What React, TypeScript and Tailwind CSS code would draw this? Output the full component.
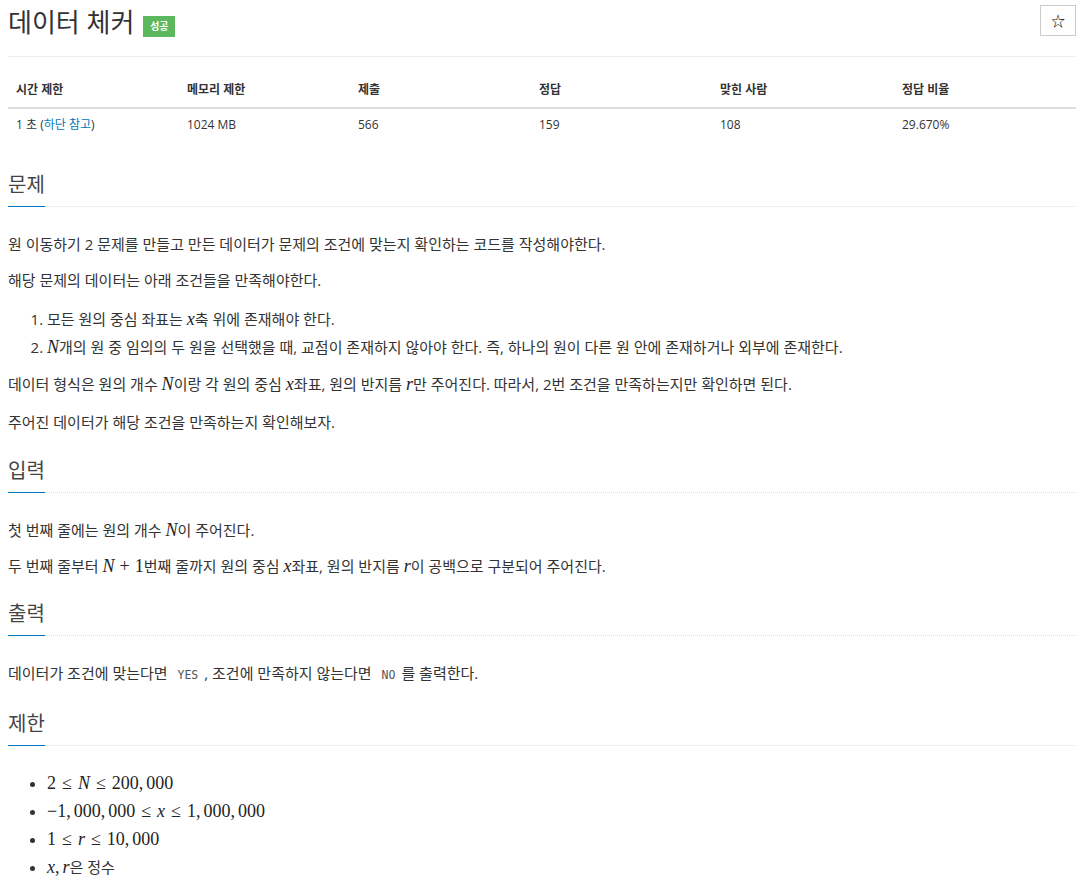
import React from "react";

const M = ({ children }: { children: React.ReactNode }) => (
  <span className="font-['Liberation_Serif',serif] text-[18px] leading-[20px] text-[#222]">{children}</span>
);

const V = ({ children }: { children: React.ReactNode }) => <i className="italic">{children}</i>;

const Le = () => <span className="mx-[6px]">≤</span>;

// comma in math mode: followed by a thin space
const C = () => <span className="mr-[3px]">,</span>;

const Code = ({ children }: { children: React.ReactNode }) => (
  <code className="px-[6px] font-['DejaVu_Sans_Mono',monospace] text-[11.5px] text-[#555]">{children}</code>
);

// margins of the last paragraph collapse into the section margin
const Section = ({
  title,
  children,
  top = "mt-[24px]",
  contentTop = "pt-[26px]",
}: {
  title: string;
  children: React.ReactNode;
  top?: string;
  contentTop?: string;
}) => (
  <section className={top}>
    <div className="border-b border-dotted border-[#ddd]">
      <h2 className="inline-block -mb-px border-b border-[#0076c0] pb-[7px] text-[20px] leading-[28px] font-normal text-[#444]">
        {title}
      </h2>
    </div>
    <div className={contentTop}>{children}</div>
  </section>
);

const P = ({ children, mb = "mb-[14px]" }: { children: React.ReactNode; mb?: string }) => (
  <p className={`${mb} text-[15px] leading-[22px]`}>{children}</p>
);

const stats = [
  { label: "시간 제한", value: "time" },
  { label: "메모리 제한", value: "1024 MB" },
  { label: "제출", value: "566" },
  { label: "정답", value: "159" },
  { label: "맞힌 사람", value: "108" },
  { label: "정답 비율", value: "29.670%" },
];

const widths = ["w-[171px]", "w-[171px]", "w-[181px]", "w-[181px]", "w-[182px]", "w-[182px]"];

export default function App() {
  return (
    <div className="min-h-[884px] bg-white pl-[8px] pr-[14px] font-['Open_Sans','Noto_Sans_CJK_KR',sans-serif] text-[#333]">
      <div className="flex h-[57px] items-start justify-between border-b border-[#eee] pt-[5px]">
        <div className="flex items-center">
          <h1 className="text-[26px] leading-[34px] font-normal text-[#333]">데이터 체커</h1>
          <span className="ml-[9px] mt-[9px] flex h-[21px] w-[32px] items-center justify-center bg-[#5cb85c] text-[10px] font-bold text-white">
            성공
          </span>
        </div>
        <button className="flex h-[31px] w-[36px] items-center justify-center border border-[#ccc] bg-white text-[14px] text-black">
          ☆
        </button>
      </div>

      <table className="mt-[16px] w-full table-fixed border-collapse text-[12px]">
        <colgroup>
          {widths.map((w, i) => (
            <col key={i} className={w} />
          ))}
        </colgroup>
        <thead>
          <tr>
            {stats.map((s) => (
              <th key={s.label} className="border-b-2 border-[#ddd] px-[8px] py-[8px] text-left leading-[18px] font-bold text-[#333]">
                {s.label}
              </th>
            ))}
          </tr>
        </thead>
        <tbody>
          <tr>
            {stats.map((s) => (
              <td key={s.label} className="px-[8px] py-[7px] leading-[17px]">
                {s.value === "time" ? (
                  <>
                    1 초 (<a className="text-[#0076c0]">하단 참고</a>)
                  </>
                ) : (
                  s.value
                )}
              </td>
            ))}
          </tr>
        </tbody>
      </table>

      <Section title="문제" top="mt-[31px]">
        <P>원 이동하기 2 문제를 만들고 만든 데이터가 문제의 조건에 맞는지 확인하는 코드를 작성해야한다.</P>
        <P>해당 문제의 데이터는 아래 조건들을 만족해야한다.</P>
        <ol className="mb-[12px] list-decimal pl-[39px] text-[15px] leading-[28px]">
          <li>
            모든 원의 중심 좌표는{" "}
            <M>
              <V>x</V>
            </M>
            축 위에 존재해야 한다.
          </li>
          <li>
            <M>
              <V>N</V>
            </M>
            개의 원 중 임의의 두 원을 선택했을 때, 교점이 존재하지 않아야 한다. 즉, 하나의 원이 다른 원 안에 존재하거나 외부에 존재한다.
          </li>
        </ol>
        <P mb="mb-[16px]">
          데이터 형식은 원의 개수{" "}
          <M>
            <V>N</V>
          </M>
          이랑 각 원의 중심{" "}
          <M>
            <V>x</V>
          </M>
          좌표, 원의 반지름{" "}
          <M>
            <V>r</V>
          </M>
          만 주어진다. 따라서, 2번 조건을 만족하는지만 확인하면 된다.
        </P>
        <P>주어진 데이터가 해당 조건을 만족하는지 확인해보자.</P>
      </Section>

      <Section title="입력">
        <P>
          첫 번째 줄에는 원의 개수{" "}
          <M>
            <V>N</V>
          </M>
          이 주어진다.
        </P>
        <P>
          두 번째 줄부터{" "}
          <M>
            <V>N</V>
            <span className="mx-[5px]">+</span>1
          </M>
          번째 줄까지 원의 중심{" "}
          <M>
            <V>x</V>
          </M>
          좌표, 원의 반지름{" "}
          <M>
            <V>r</V>
          </M>
          이 공백으로 구분되어 주어진다.
        </P>
      </Section>

      <Section title="출력" top="mt-[23px]">
        <P>
          데이터가 조건에 맞는다면 <Code>YES</Code>, 조건에 만족하지 않는다면 <Code>NO</Code>를 출력한다.
        </P>
      </Section>

      <Section title="제한" contentTop="pt-[23px]">
        <ul className="list-disc pl-[39px] text-[15px] leading-[28px]">
          <li>
            <M>
              2<Le />
              <V>N</V>
              <Le />
              200<C />
              000
            </M>
          </li>
          <li>
            <M>
              −1<C />
              000<C />
              000<Le />
              <V>x</V>
              <Le />1<C />
              000<C />
              000
            </M>
          </li>
          <li>
            <M>
              1<Le />
              <V>r</V>
              <Le />
              10<C />
              000
            </M>
          </li>
          <li>
            <M>
              <V>x</V>
              <C />
              <V>r</V>
            </M>
            은 정수
          </li>
        </ul>
      </Section>
    </div>
  );
}
